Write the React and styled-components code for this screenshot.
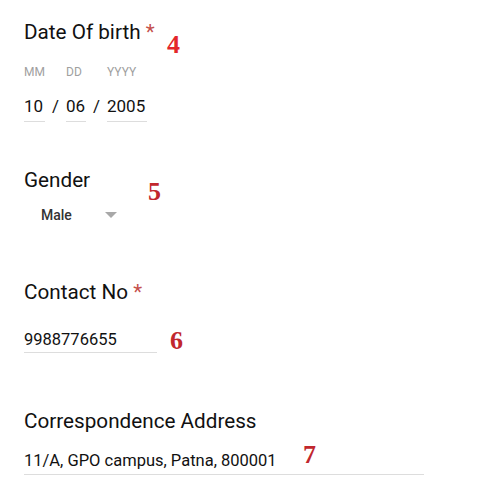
import React from 'react';
import styled, { createGlobalStyle } from 'styled-components';

const GlobalStyle = createGlobalStyle`
  body {
    margin: 0;
    background: #fff;
    font-family: Roboto, "Liberation Sans", sans-serif;
    color: #1a1a1a;
  }
`;

const Page = styled.main`
  width: 497px;
  height: 491px;
  padding: 20px 0 0 24px;
  box-sizing: border-box;
  display: flex;
  flex-direction: column;
`;

const Section = styled.section`
  position: relative;
  display: flex;
  flex-direction: column;
  align-items: flex-start;
  margin-top: ${p => p.$gap || 0}px;
`;

const Label = styled.label`
  font-size: 20.7px;
  line-height: 24px;
  color: #111;
`;

const Required = styled.span`
  color: #c5504c;
`;

const DateRow = styled.div`
  display: flex;
  align-items: flex-end;
  margin-top: 21px;
`;

const DateField = styled.div`
  display: flex;
  flex-direction: column;
  width: ${p => p.$width}px;
`;

const SubLabel = styled.span`
  font-size: 12px;
  line-height: 14px;
  color: #a0a0a0;
  white-space: nowrap;
`;

const DateValue = styled.span`
  margin-top: 17px;
  font-size: 17px;
  line-height: 20px;
  padding-bottom: 5px;
  border-bottom: 1px solid #ddd;
  color: #111;
`;

const Slash = styled.span`
  width: 21px;
  text-align: center;
  font-size: 17px;
  line-height: 20px;
  padding-bottom: 6px;
  color: #111;
`;

const Select = styled.div`
  margin-top: 15px;
  display: flex;
  align-items: center;
  padding-left: 17px;
  height: 16px;
`;

const SelectValue = styled.span`
  font-size: 14px;
  font-weight: 500;
  line-height: 16px;
  color: #333;
  width: 64px;
`;

const Arrow = styled.span`
  width: 0;
  height: 0;
  border-left: 6px solid transparent;
  border-right: 6px solid transparent;
  border-top: 6px solid #a8a8a8;
`;

const TextValue = styled.div`
  margin-top: ${p => p.$gap}px;
  width: ${p => p.$width}px;
  font-size: 16.5px;
  line-height: 19px;
  padding-bottom: ${p => p.$pad}px;
  border-bottom: 1px solid #ddd;
  color: #111;
  white-space: nowrap;
`;

const Marker = styled.span`
  position: absolute;
  left: ${p => p.$x}px;
  top: ${p => p.$y}px;
  font-family: "Liberation Serif", serif;
  font-weight: bold;
  font-size: 26px;
  line-height: 26px;
  color: ${p => p.$color || '#c1272d'};
`;

const App = () => (
  <>
    <GlobalStyle />
    <Page>
      <Section>
        <Label>Date Of birth <Required>*</Required></Label>
        <DateRow>
          <DateField $width={21}>
            <SubLabel>MM</SubLabel>
            <DateValue>10</DateValue>
          </DateField>
          <Slash>/</Slash>
          <DateField $width={20}>
            <SubLabel>DD</SubLabel>
            <DateValue>06</DateValue>
          </DateField>
          <Slash>/</Slash>
          <DateField $width={40}>
            <SubLabel>YYYY</SubLabel>
            <DateValue>2005</DateValue>
          </DateField>
        </DateRow>
        <Marker $x={143} $y={12} $color="#e3262b">4</Marker>
      </Section>

      <Section $gap={46}>
        <Label>Gender</Label>
        <Select>
          <SelectValue>Male</SelectValue>
          <Arrow />
        </Select>
        <Marker $x={124} $y={11}>5</Marker>
      </Section>

      <Section $gap={57}>
        <Label>Contact No <Required>*</Required></Label>
        <TextValue $gap={26} $width={133} $pad={3}>9988776655</TextValue>
        <Marker $x={146} $y={48}>6</Marker>
      </Section>

      <Section $gap={56}>
        <Label>Correspondence Address</Label>
        <TextValue $gap={18} $width={400} $pad={4}>11/A, GPO campus, Patna, 800001</TextValue>
        <Marker $x={279} $y={33}>7</Marker>
      </Section>
    </Page>
  </>
);

export default App;
